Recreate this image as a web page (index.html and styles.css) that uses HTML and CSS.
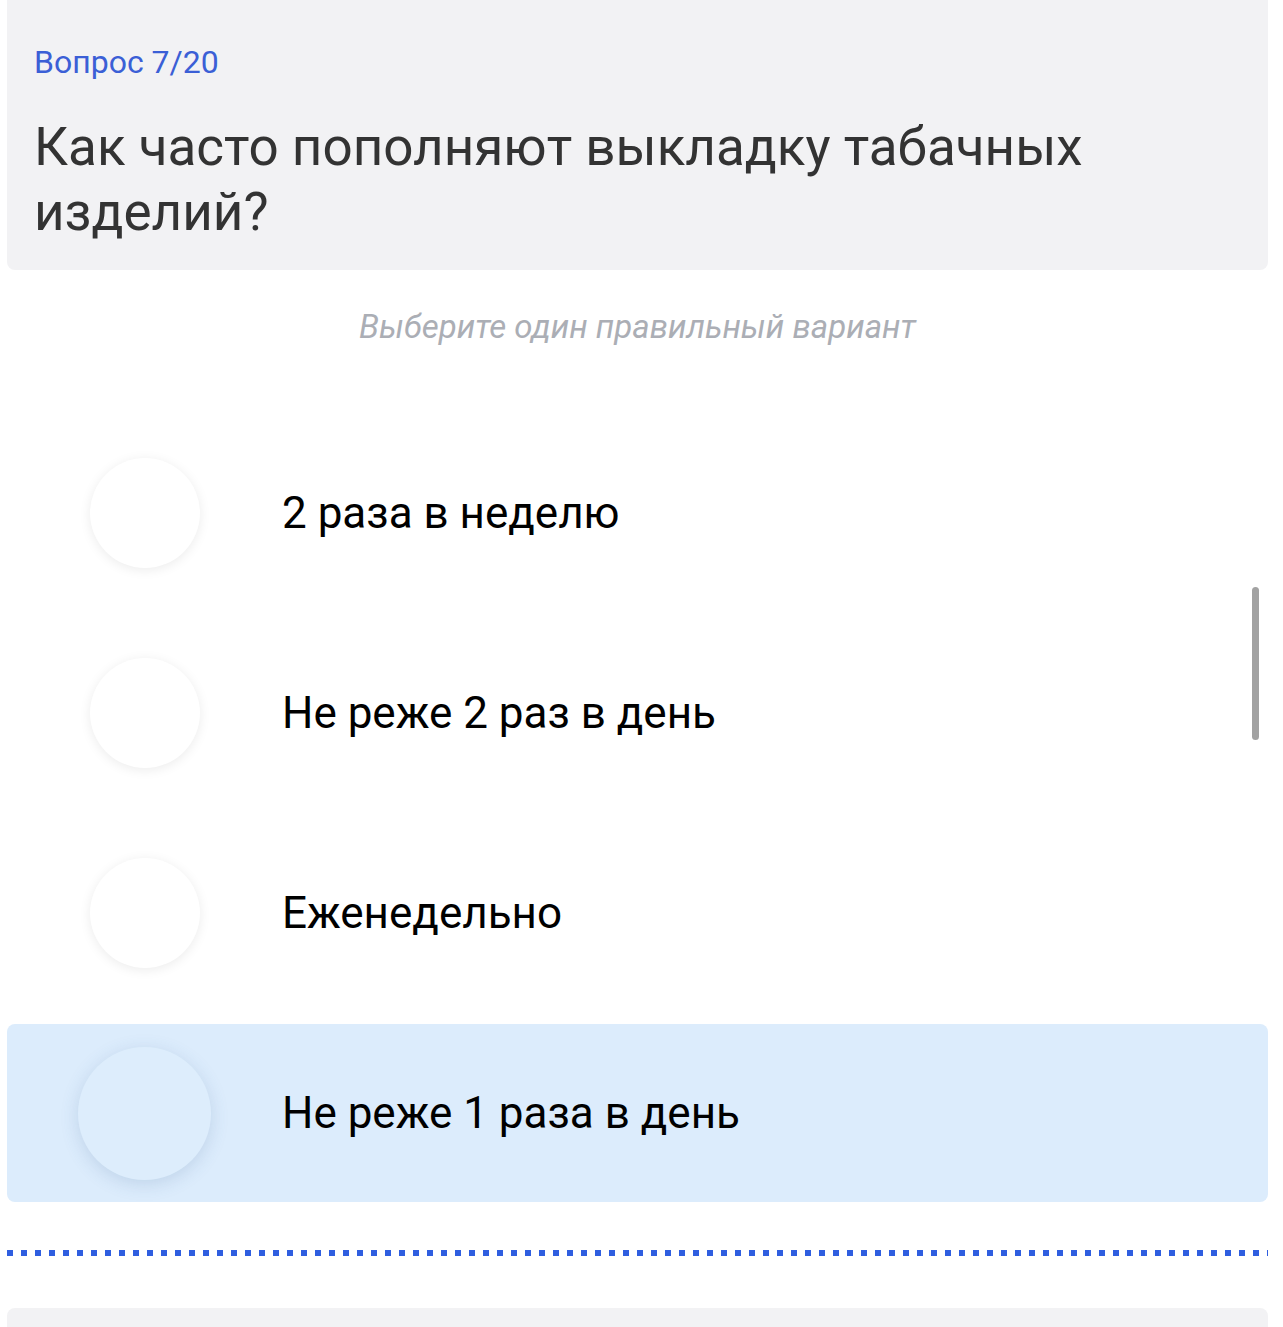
FILE: index.html
```html
<!DOCTYPE html>
<html lang="ru">
<head>
<meta charset="UTF-8" />
<meta name="viewport" content="width=device-width, initial-scale=1.0"/>
<title>Тест</title>
<link rel="stylesheet" href="styles.css">
</head>
<body>

<div class="quiz">
  <div class="question-card">
    <div class="counter">Вопрос 7/20</div>
    <h1 class="question">Как часто пополняют выкладку табачных изделий?</h1>
  </div>

  <p class="hint">Выберите один правильный вариант</p>

  <ul class="options">
    <li class="option">
      <span class="radio"></span>
      <span class="label">2 раза в неделю</span>
    </li>
    <li class="option">
      <span class="radio"></span>
      <span class="label">Не реже 2 раз в день</span>
    </li>
    <li class="option">
      <span class="radio"></span>
      <span class="label">Еженедельно</span>
    </li>
    <li class="option active">
      <span class="radio"></span>
      <span class="label">Не реже 1 раза в день</span>
    </li>
  </ul>

  <div class="divider"></div>

  <div class="next-card"></div>
</div>

<div class="scroll-thumb"></div>

</body>
</html>
```

FILE: styles.css
```css
html, body {
  overflow: hidden;
}

body {
  margin: 0;
  padding: 0;
  background: #ffffff;
  font-family: Roboto, "Noto Sans", Arial, sans-serif;
}

.quiz {
  padding: 0 15px 0 7px;
}

.question-card {
  background: #f2f2f4;
  border-radius: 0 0 8px 8px;
  height: 270px;
  box-sizing: border-box;
  padding: 42px 27px 0;
}

.counter {
  color: #3b5fd6;
  font-size: 32px;
  line-height: 40px;
}

.question {
  margin: 33px 0 0;
  font-weight: normal;
  font-size: 53px;
  line-height: 65px;
  color: #333333;
  max-width: 1120px;
}

.hint {
  margin: 37px 0 0;
  text-align: center;
  font-style: italic;
  font-size: 33px;
  line-height: 40px;
  color: #abaeb5;
}

.options {
  list-style: none;
  margin: 77px 0 0;
  padding: 0;
  display: flex;
  flex-direction: column;
  gap: 22px;
}

.option {
  display: flex;
  align-items: center;
  gap: 71px;
  height: 178px;
  padding-left: 71px;
  border-radius: 8px;
}

.radio {
  flex: none;
  width: 133px;
  display: flex;
  justify-content: center;
}

.radio::before {
  content: "";
  width: 110px;
  height: 110px;
  border-radius: 50%;
  background: #ffffff;
  box-shadow: 0 2px 12px rgba(0, 0, 0, 0.08);
}

.label {
  font-size: 44px;
  color: #000000;
}

.option.active {
  background: #dcecfc;
}

.option.active .radio::before {
  width: 133px;
  height: 133px;
  background: #ddedfc;
  box-shadow: 0 4px 18px rgba(60, 100, 150, 0.18);
}

.divider {
  margin-top: 48px;
  height: 6px;
  background-image: linear-gradient(to right, #2f5ee0 6px, transparent 6px);
  background-size: 14px 6px;
}

.next-card {
  margin-top: 52px;
  height: 80px;
  background: #f2f2f4;
  border-radius: 8px 8px 0 0;
}

.scroll-thumb {
  position: absolute;
  top: 587px;
  left: 1252px;
  width: 7px;
  height: 153px;
  border-radius: 4px;
  background: #a2a2a2;
}
```
